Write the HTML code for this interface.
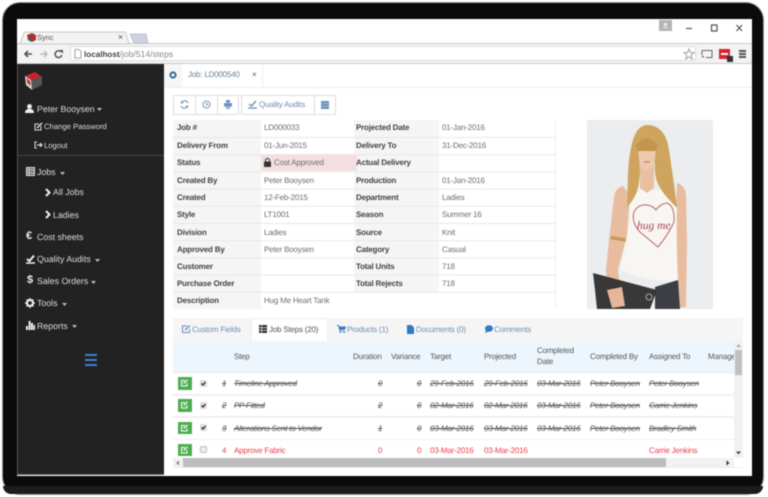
<!DOCTYPE html>
<html><head><meta charset="utf-8"><title>Sync</title>
<style>
html,body{margin:0;padding:0;background:#fff;}
#w{position:relative;width:768px;height:497px;overflow:hidden;background:#fff;font-family:"Liberation Sans",sans-serif;filter:blur(.45px);text-rendering:geometricPrecision;}
#w div,#w svg.a{position:absolute;}
.t{white-space:nowrap;position:absolute;}
.l{font-size:8px;letter-spacing:-.2px;font-weight:bold;color:#444;}
.v{font-size:8px;letter-spacing:-.2px;color:#6e6e6e;}
.s{font-size:8.800px;color:#ddd;}
.h{font-size:8px;letter-spacing:-.2px;color:#555;}
.d{font-size:8px;letter-spacing:-.2px;color:#555;font-style:italic;text-decoration:line-through;}
.r{font-size:8px;letter-spacing:-.2px;color:#e8404a;}
.b{font-size:8px;letter-spacing:-.2px;color:#6d8fb5;}
</style></head><body>
<div id="w">
<!-- device -->
<div style="left:2px;top:2px;width:760px;height:491px;background:#0b0b0b;border-radius:18px;border:1px solid #999;"></div>
<div style="left:17px;top:19px;width:735px;height:457px;background:#fff;"></div>
<div style="left:3px;top:486px;width:760px;height:8px;background:#1c1c1c;border-radius:0 0 18px 18px;"></div>

<!-- browser chrome -->
<div style="left:17px;top:43px;width:735px;height:21px;background:#f3f3f3;border-top:1px solid #ccc;box-sizing:border-box;border-bottom:1px solid #ccc;"></div>
<svg class="a" style="left:17px;top:31px" width="135" height="14"><path d="M3 13 L7 2 Q7.500 1 9 1 H107 Q109 1 109 2.500 L112 13Z" fill="#f3f3f3" stroke="#c8c8c8"/><path d="M113 3 H129 L131 12 H117Z" fill="#cbd3e0" stroke="#bcc3cf"/></svg>
<svg class="a" style="left:27px;top:33px" width="9" height="9"><path d="M0 2 L5 0 L9 2 V7 L5 9 L1 7Z" fill="#a33"/><path d="M1 5 L5 4 V9 L1 7Z" fill="#555"/></svg>
<span class="t" style="left:37px;top:33px;font-size:7.500px;color:#555;">Sync</span>
<span class="t" style="left:118px;top:32px;font-size:9px;color:#555;">×</span>
<div style="left:659px;top:20px;width:13px;height:11px;background:#b4b4b4;"></div>
<svg class="a" style="left:659px;top:20px" width="13" height="11"><path d="M4 8 H9 V7 H4Z M5 3 H8 V6 H5Z" fill="#eee"/></svg>
<svg class="a" style="left:684px;top:22px" width="62" height="12" fill="none" stroke="#555" stroke-width="1.200"><path d="M2 6.500 H8"/><path d="M27.500 3 H33 V9 H27.500Z"/><path d="M52.500 3 L58 9 M58 3 L52.500 9"/></svg>
<svg class="a" style="left:23px;top:49px" width="42" height="10"><path d="M9 5 H2 M5 2 L2 5 L5 8" stroke="#555" stroke-width="1.600" fill="none"/><path d="M17 5 H24 M21 2 L24 5 L21 8" stroke="#bbb" stroke-width="1.500" fill="none"/><path d="M38 2.800 A3.400 3.400 0 1 0 38.800 6" stroke="#555" stroke-width="1.500" fill="none"/><path d="M36 1 H40 V4.500Z" fill="#555"/></svg>
<div style="left:70px;top:46px;width:626px;height:15px;background:#fff;border:1px solid #ddd;box-sizing:border-box;border-radius:2px;"></div>
<svg class="a" style="left:74px;top:49px" width="8" height="10"><path d="M1 .5 H5 L7 2.500 V9 H1Z" fill="none" stroke="#888" stroke-width=".8"/></svg>
<span class="t" style="left:84px;top:49px;font-size:8.600px;color:#888;"><b style="color:#444;font-size:8.100px">localhost</b>/job/514/steps</span>
<svg class="a" style="left:683px;top:48px" width="12" height="12"><path d="M6 1 L7.400 4.600 H11 L8.200 7 L9.200 11 L6 8.700 L2.800 11 L3.800 7 L1 4.600 H4.600Z" fill="#fff" stroke="#999" stroke-width=".9"/></svg>
<svg class="a" style="left:701px;top:49px" width="12" height="11"><path d="M1 1.500 H11 V8.500 H5 M1 6 V1.500" fill="none" stroke="#666"/><path d="M1 6 V8.500 H3.500Z" fill="#666"/></svg>
<div style="left:719px;top:49px;width:11px;height:10px;background:#d9232e;"></div>
<div style="left:721px;top:53px;width:7px;height:1.500px;background:#fff;"></div>
<div style="left:727px;top:56px;width:6px;height:6px;background:#333;"></div>
<div style="left:739px;top:50px;width:7px;height:1.500px;background:#555;box-shadow:0 3px #555,0 6px #555;"></div>

<!-- sidebar -->
<div style="left:17px;top:64px;width:147px;height:411px;background:#222;border-left:1px solid #555;border-bottom:1px solid #666;box-sizing:border-box;"></div>
<div style="left:18px;top:155px;width:146px;height:1px;background:#444;"></div>
<svg class="a" style="left:24px;top:72px" width="18" height="18"><path d="M1 4 L11 0 L18 5 L7 8Z" fill="#c6252d"/><path d="M7 8 L18 5 V13 L8 18Z" fill="#555"/><path d="M1 4 L7 8 L8 18 L2 13Z" fill="#ddd"/><path d="M2.500 6 L6 9 L6.500 14 L3.500 11Z" fill="#c6252d"/></svg>
<svg class="a" style="left:25px;top:104px" width="9" height="9" fill="#eee"><circle cx="4.500" cy="2.500" r="2.400"/><path d="M0 9 Q0 5.500 3 5 H6 Q9 5.500 9 9Z"/></svg>
<span class="t s" style="left:37px;top:104px;">Peter Booysen</span>
<svg class="a" style="left:97px;top:108px" width="5" height="3"><path d="M0 0 H5 L2.500 3Z" fill="#bbb"/></svg>
<svg class="a" style="left:34px;top:122px" width="9" height="9" fill="none" stroke="#ddd"><path d="M7 4 V8 H1 V2 H5"/><path d="M3 6 L8 1" stroke-width="1.500"/></svg>
<span class="t s" style="left:44px;top:122px;font-size:7.700px;">Change Password</span>
<svg class="a" style="left:34px;top:141px" width="9" height="8" fill="none" stroke="#ddd"><path d="M3 1 H1 V7 H3"/><path d="M3 4 H8 M6 2 L8 4 L6 6" stroke-width="1.200"/></svg>
<span class="t s" style="left:44px;top:141px;font-size:7.700px;">Logout</span>
<svg class="a" style="left:26px;top:167px" width="9" height="9"><rect x=".5" y=".5" width="8" height="8" fill="#777" stroke="#ddd"/><path d="M0 3.200 H9 M0 5.800 H9 M3.200 0 V9" stroke="#ddd" stroke-width=".7"/></svg>
<span class="t s" style="left:37px;top:167px;">Jobs</span>
<svg class="a" style="left:60px;top:172px" width="5" height="3"><path d="M0 0 H5 L2.500 3Z" fill="#bbb"/></svg>
<svg class="a" style="left:45px;top:188px" width="6" height="9"><path d="M1 1 L4.500 4.500 L1 8" stroke="#eee" stroke-width="2" fill="none"/></svg>
<span class="t s" style="left:53px;top:187px;">All Jobs</span>
<svg class="a" style="left:45px;top:210px" width="6" height="9"><path d="M1 1 L4.500 4.500 L1 8" stroke="#eee" stroke-width="2" fill="none"/></svg>
<span class="t s" style="left:53px;top:210px;">Ladies</span>
<span class="t" style="left:26px;top:230px;font-size:11px;font-weight:bold;color:#eee;">€</span>
<span class="t s" style="left:37px;top:232px;">Cost sheets</span>
<svg class="a" style="left:26px;top:254px" width="9" height="10"><path d="M1 5 L3.500 7 L8 1.500" stroke="#eee" stroke-width="2" fill="none"/><path d="M0 9 H9" stroke="#eee" stroke-width="1.500"/></svg>
<span class="t s" style="left:37px;top:254px;">Quality Audits</span>
<svg class="a" style="left:95px;top:259px" width="5" height="3"><path d="M0 0 H5 L2.500 3Z" fill="#bbb"/></svg>
<span class="t" style="left:27px;top:274px;font-size:11px;font-weight:bold;color:#eee;">$</span>
<span class="t s" style="left:37px;top:276px;">Sales Orders</span>
<svg class="a" style="left:91px;top:281px" width="5" height="3"><path d="M0 0 H5 L2.500 3Z" fill="#bbb"/></svg>
<svg class="a" style="left:25px;top:298px" width="10" height="10"><circle cx="5" cy="5" r="3" fill="none" stroke="#eee" stroke-width="2.200"/><path d="M5 0 V10 M0 5 H10 M1.500 1.500 L8.500 8.500 M8.500 1.500 L1.500 8.500" stroke="#eee" stroke-width="1.200" stroke-dasharray="1.600 6.800"/></svg>
<span class="t s" style="left:37px;top:298px;">Tools</span>
<svg class="a" style="left:62px;top:303px" width="5" height="3"><path d="M0 0 H5 L2.500 3Z" fill="#bbb"/></svg>
<svg class="a" style="left:26px;top:320px" width="9" height="10" fill="#eee"><rect x="0" y="6" width="2" height="4"/><rect x="2.600" y="1" width="2" height="9"/><rect x="5" y="3" width="2" height="7"/><rect x="7.400" y="5" width="1.600" height="5"/></svg>
<span class="t s" style="left:37px;top:321px;">Reports</span>
<svg class="a" style="left:72px;top:325px" width="5" height="3"><path d="M0 0 H5 L2.500 3Z" fill="#bbb"/></svg>
<div style="left:85px;top:354px;width:12px;height:2px;background:#3f7fd8;box-shadow:0 5px #3f7fd8,0 10px #3f7fd8;"></div>

<!-- content tabs -->
<div style="left:165px;top:87px;width:587px;height:1px;background:#eee;"></div>
<div style="left:164px;top:64px;width:18px;height:23px;background:#f6f6f6;"></div>
<div style="left:262px;top:64px;width:1px;height:23px;background:#eee;"></div>
<svg class="a" style="left:169px;top:71px" width="8" height="8"><circle cx="4" cy="4" r="2.600" fill="none" stroke="#2d6a9f" stroke-width="2"/></svg>
<span class="t v" style="left:188px;top:70px;color:#6a7f92;">Job: LD000540</span>
<span class="t" style="left:252px;top:70px;font-size:8px;color:#456;">×</span>

<!-- toolbar -->
<div style="left:173px;top:95px;width:66px;height:20px;border:1px solid #ddd;box-sizing:border-box;"></div>
<div style="left:195px;top:95px;width:1px;height:20px;background:#ddd;"></div>
<div style="left:217px;top:95px;width:1px;height:20px;background:#ddd;"></div>
<div style="left:241px;top:95px;width:95px;height:20px;border:1px solid #ddd;box-sizing:border-box;"></div>
<div style="left:314px;top:95px;width:1px;height:20px;background:#ddd;"></div>
<svg class="a" style="left:180px;top:100px" width="9" height="9" fill="none" stroke="#7f9fc2" stroke-width="1.200"><path d="M8 3 A3.400 3.400 0 0 0 1.800 2.800 M1 6 A3.400 3.400 0 0 0 7.200 6.200"/><path d="M1.200 .8 V3 H3.400 M7.800 8.200 V6 H5.600" stroke-width=".9"/></svg>
<svg class="a" style="left:202px;top:100px" width="9" height="9" fill="none" stroke="#7f9fc2" stroke-width="1.100"><circle cx="4.500" cy="4.500" r="3.500"/><path d="M4.500 2.500 V4.800 H6.400"/></svg>
<svg class="a" style="left:224px;top:100px" width="8" height="9" fill="#6b92bd"><rect x="2" y="0" width="4" height="2.600"/><rect x="0" y="3" width="8" height="3.600"/><rect x="2" y="6.200" width="4" height="2.800" fill="#94b1d0"/></svg>
<svg class="a" style="left:248px;top:100px" width="9" height="9"><path d="M1 4 L3.500 6 L8 1" stroke="#6b92bd" stroke-width="1.400" fill="none"/><path d="M0 8 H9" stroke="#6b92bd" stroke-width="1.300"/></svg>
<span class="t b" style="left:259px;top:100px;">Quality Audits</span>
<svg class="a" style="left:321px;top:101px" width="8" height="8"><rect width="8" height="8" fill="#6b92bd"/><path d="M0 2.700 H8 M0 5.300 H8" stroke="#b9cce0" stroke-width=".6"/></svg>

<!-- detail table -->
<div style="left:173px;top:120px;width:88px;height:189px;background:#f5f5f5;"></div>
<div style="left:354px;top:120px;width:85px;height:172px;background:#f5f5f5;"></div>
<div style="left:261px;top:154px;width:93px;height:17px;background:#f3dfe0;"></div>
<div style="left:354px;top:154px;width:3px;height:17px;background:#f3dfe0;"></div>
<div style="left:555px;top:120px;width:1px;height:189px;background:#eee;"></div>
<div style="left:173px;top:137px;width:382px;height:1px;background:#e8e8e8;box-shadow:0 17.200px #e8e8e8,0 34.400px #e8e8e8,0 51.600px #e8e8e8,0 68.800px #e8e8e8,0 86px #e8e8e8,0 103.200px #e8e8e8,0 120.400px #e8e8e8,0 137.600px #e8e8e8,0 154.800px #e8e8e8;"></div>

<span class="t l" style="left:177px;top:123px;">Job #</span><span class="t v" style="left:264px;top:123px;">LD000033</span><span class="t l" style="left:356px;top:123px;">Projected Date</span><span class="t v" style="left:442px;top:123px;">01-Jan-2016</span>
<span class="t l" style="left:177px;top:141px;">Delivery From</span><span class="t v" style="left:264px;top:141px;">01-Jun-2015</span><span class="t l" style="left:356px;top:141px;">Delivery To</span><span class="t v" style="left:442px;top:141px;">31-Dec-2016</span>
<span class="t l" style="left:177px;top:158px;">Status</span><span class="t v" style="left:274px;top:158px;">Cost Approved</span><span class="t l" style="left:356px;top:158px;">Actual Delivery</span>
<svg class="a" style="left:264px;top:158px" width="8" height="9"><rect x="0" y="3.500" width="7" height="5.500" fill="#333"/><path d="M1.500 4 V2.500 A2 2 0 0 1 5.500 2.500 V4" fill="none" stroke="#333"/></svg>
<span class="t l" style="left:177px;top:176px;">Created By</span><span class="t v" style="left:264px;top:176px;">Peter Booysen</span><span class="t l" style="left:356px;top:176px;">Production</span><span class="t v" style="left:442px;top:176px;">01-Jan-2016</span>
<span class="t l" style="left:177px;top:193px;">Created</span><span class="t v" style="left:264px;top:193px;">12-Feb-2015</span><span class="t l" style="left:356px;top:193px;">Department</span><span class="t v" style="left:442px;top:193px;">Ladies</span>
<span class="t l" style="left:177px;top:210px;">Style</span><span class="t v" style="left:264px;top:210px;">LT1001</span><span class="t l" style="left:356px;top:210px;">Season</span><span class="t v" style="left:442px;top:210px;">Summer 16</span>
<span class="t l" style="left:177px;top:228px;">Division</span><span class="t v" style="left:264px;top:228px;">Ladies</span><span class="t l" style="left:356px;top:228px;">Source</span><span class="t v" style="left:442px;top:228px;">Knit</span>
<span class="t l" style="left:177px;top:245px;">Approved By</span><span class="t v" style="left:264px;top:245px;">Peter Booysen</span><span class="t l" style="left:356px;top:245px;">Category</span><span class="t v" style="left:442px;top:245px;">Casual</span>
<span class="t l" style="left:177px;top:262px;">Customer</span><span class="t l" style="left:356px;top:262px;">Total Units</span><span class="t v" style="left:442px;top:262px;">718</span>
<span class="t l" style="left:177px;top:279px;">Purchase Order</span><span class="t l" style="left:356px;top:279px;">Total Rejects</span><span class="t v" style="left:442px;top:279px;">718</span>
<span class="t l" style="left:177px;top:296px;">Description</span><span class="t v" style="left:264px;top:296px;">Hug Me Heart Tank</span>

<!-- photo -->
<svg class="a" style="left:587px;top:120px" width="126" height="189" viewBox="587 120 126 189">
<rect x="587" y="120" width="126" height="189" fill="#ecedef"/>
<path d="M623 186 Q615 188 614 197 L609 240 L606 270 L607 300 L622 300 L618 270 L627 235 L630 195Z" fill="#e8bd9f"/>
<path d="M677 183 Q686 186 686 197 L687 243 L686 307 L673 308 L676 280 L675 230Z" fill="#e8bd9f"/>
<path d="M630 200 L640 190 L658 190 L668 186 L677 207 Q676 240 678 281 Q650 283 620 270 Q628 240 630 215Z" fill="#f8f6f3"/>
<path d="M640 165 H654 V188 L647 193 L640 188Z" fill="#e8bf9f"/>
<path d="M647 125 C636 126 632 138 629 160 C627 180 628 195 627 207 C634 200 639 192 640 172 L639 150 L654 150 L655 172 C656 188 668 198 677 208 C675 190 672 170 669 150 C667 135 660 125 647 125Z" fill="#cfa45e"/>
<path d="M638 146 H656 L655 160 Q652 170 647 170 Q641 170 639 160Z" fill="#efc9ad"/>
<path d="M636 146 Q646 130 658 146 L656 151 L638 151Z" fill="#c59550"/>
<path d="M644 162 H650" stroke="#c76a6a" stroke-width="1"/>
<path d="M658 247 L640 232 Q631 222 634 212 Q638 204 647 205 Q653 206 656 210 Q660 204 667 203 Q675 206 674 222 Q668 235 658 247Z" fill="none" stroke="#b9646c" stroke-width="1"/>
<text x="637" y="229" font-family="Liberation Serif,serif" font-style="italic" font-size="11.500" fill="#a94a56">hug me</text>
<rect x="611" y="237" width="15" height="3.500" fill="#c59c52" transform="rotate(8 618 238)"/>
<path d="M655 287 L678 280 L680 309 L655 309Z" fill="#3b3f44"/>
<path d="M593 273 L657 290 L650 309 L597 309 L595 290Z" fill="#383838"/>
<circle cx="649" cy="297" r="3" fill="none" stroke="#aaa" stroke-width="1"/>
<path d="M607 290 L622 287 L625 306 L612 308Z" fill="#e6b698"/>
</svg>

<!-- job tabs -->
<div style="left:173px;top:318px;width:570px;height:23px;background:#f5f5f5;"></div>
<div style="left:251px;top:318px;width:77px;height:24px;background:#fff;border:1px solid #eee;box-sizing:border-box;border-bottom:0;"></div>
<svg class="a" style="left:182px;top:325px" width="9" height="8" fill="none" stroke="#6d8fb5"><path d="M7.500 4 V7.500 H.5 V1 H5"/><path d="M3 5 L8 .5" stroke-width="1.300"/></svg>
<span class="t b" style="left:192px;top:325px;">Custom Fields</span>
<svg class="a" style="left:259px;top:325px" width="8" height="8"><rect width="8" height="8" fill="#333"/><path d="M0 2.700 H8 M0 5.300 H8 M2.700 0 V8" stroke="#fff" stroke-width=".6"/></svg>
<span class="t h" style="left:269px;top:325px;">Job Steps (20)</span>
<svg class="a" style="left:337px;top:325px" width="9" height="8" fill="#3a7cc2"><path d="M0 0 H2 L2.500 1.500 H9 L8 5 H3 L3.300 6 H8 V6.800 H2.500 L1.300 1 H0Z"/><circle cx="3.300" cy="7.400" r=".7"/><circle cx="7.300" cy="7.400" r=".7"/></svg>
<span class="t b" style="left:347px;top:325px;">Products (1)</span>
<svg class="a" style="left:407px;top:325px" width="7" height="9"><path d="M0 0 H4.500 L7 2.500 V9 H0Z" fill="#2f78c4"/></svg>
<span class="t b" style="left:416px;top:325px;">Documents (0)</span>
<svg class="a" style="left:485px;top:325px" width="8" height="8"><ellipse cx="4" cy="3.500" rx="4" ry="3.200" fill="#2f78c4"/><path d="M1 5 L0 8 L3.500 6.500Z" fill="#2f78c4"/></svg>
<span class="t b" style="left:494px;top:325px;">Comments</span>

<!-- grid -->
<div style="left:173px;top:341px;width:561px;height:117px;background:#fff;overflow:hidden;"></div>
<div style="left:173px;top:341px;width:561px;height:31px;background:#edf6fc;"></div>
<div style="left:173px;top:372px;width:561px;height:1px;background:#e6e6e6;"></div>
<div style="left:173px;top:394px;width:561px;height:2px;background:#f0f0f0;"></div>
<div style="left:173px;top:416px;width:561px;height:2px;background:#f0f0f0;"></div>
<div style="left:173px;top:439px;width:561px;height:1px;background:#f0f0f0;"></div>
<span class="t h" style="left:234px;top:352px;">Step</span>
<span class="t h" style="left:353px;top:352px;">Duration</span>
<span class="t h" style="left:391px;top:352px;">Variance</span>
<span class="t h" style="left:430px;top:352px;">Target</span>
<span class="t h" style="left:484px;top:352px;">Projected</span>
<span class="t h" style="left:537px;top:346px;">Completed</span>
<span class="t h" style="left:537px;top:357px;">Date</span>
<span class="t h" style="left:590px;top:352px;">Completed By</span>
<span class="t h" style="left:649px;top:352px;">Assigned To</span>
<div style="left:708px;top:351px;width:26px;height:12px;overflow:hidden;"><span class="t h" style="left:0;top:1px;">Manager</span></div>

<!-- row icons -->
<div style="left:178px;top:377px;width:14px;height:13px;background:#4cae4f;"></div>
<div style="left:178px;top:399px;width:14px;height:13px;background:#4cae4f;"></div>
<div style="left:178px;top:422px;width:14px;height:12px;background:#4cae4f;"></div>
<div style="left:178px;top:444px;width:14px;height:12px;background:#4cae4f;"></div>
<svg class="a" style="left:181px;top:379px" width="7" height="8" fill="none" stroke="#fff"><path d="M6 4 V7 H.5 V1.500 H4"/><path d="M2.500 4.500 L6.500 1" stroke-width="1.200"/></svg>
<svg class="a" style="left:181px;top:401px" width="7" height="8" fill="none" stroke="#fff"><path d="M6 4 V7 H.5 V1.500 H4"/><path d="M2.500 4.500 L6.500 1" stroke-width="1.200"/></svg>
<svg class="a" style="left:181px;top:424px" width="7" height="8" fill="none" stroke="#fff"><path d="M6 4 V7 H.5 V1.500 H4"/><path d="M2.500 4.500 L6.500 1" stroke-width="1.200"/></svg>
<svg class="a" style="left:181px;top:446px" width="7" height="8" fill="none" stroke="#fff"><path d="M6 4 V7 H.5 V1.500 H4"/><path d="M2.500 4.500 L6.500 1" stroke-width="1.200"/></svg>
<svg class="a" style="left:200px;top:380px" width="7" height="7"><rect width="7" height="7" rx="1.500" fill="#ddd"/><path d="M1.500 3.500 L3 5 L5.500 2" stroke="#222" stroke-width="1.200" fill="none"/></svg>
<svg class="a" style="left:200px;top:402px" width="7" height="7"><rect width="7" height="7" rx="1.500" fill="#ddd"/><path d="M1.500 3.500 L3 5 L5.500 2" stroke="#222" stroke-width="1.200" fill="none"/></svg>
<svg class="a" style="left:200px;top:424px" width="7" height="7"><rect width="7" height="7" rx="1.500" fill="#ddd"/><path d="M1.500 3.500 L3 5 L5.500 2" stroke="#222" stroke-width="1.200" fill="none"/></svg>
<svg class="a" style="left:200px;top:446px" width="7" height="7"><rect x=".5" y=".5" width="6" height="6" rx="1.500" fill="#eee" stroke="#bbb"/></svg>

<!-- rows -->
<span class="t d" style="left:222px;top:378.500px;">1</span><span class="t d" style="left:234px;top:378.500px;">Timeline Approved</span><span class="t d" style="left:378px;top:378.500px;">0</span><span class="t d" style="left:417px;top:378.500px;">0</span><span class="t d" style="left:430px;top:378.500px;">29-Feb-2016</span><span class="t d" style="left:484px;top:378.500px;">29-Feb-2016</span><span class="t d" style="left:537px;top:378.500px;">03-Mar-2016</span><span class="t d" style="left:590px;top:378.500px;">Peter Booysen</span><span class="t d" style="left:649px;top:378.500px;">Peter Booysen</span>
<span class="t d" style="left:222px;top:401px;">2</span><span class="t d" style="left:234px;top:401px;">PP Fitted</span><span class="t d" style="left:378px;top:401px;">2</span><span class="t d" style="left:417px;top:401px;">0</span><span class="t d" style="left:430px;top:401px;">02-Mar-2016</span><span class="t d" style="left:484px;top:401px;">02-Mar-2016</span><span class="t d" style="left:537px;top:401px;">03-Mar-2016</span><span class="t d" style="left:590px;top:401px;">Peter Booysen</span><span class="t d" style="left:649px;top:401px;">Carrie Jenkins</span>
<span class="t d" style="left:222px;top:423.500px;">3</span><span class="t d" style="left:234px;top:423.500px;">Alterations Sent to Vendor</span><span class="t d" style="left:378px;top:423.500px;">1</span><span class="t d" style="left:417px;top:423.500px;">0</span><span class="t d" style="left:430px;top:423.500px;">03-Mar-2016</span><span class="t d" style="left:484px;top:423.500px;">03-Mar-2016</span><span class="t d" style="left:537px;top:423.500px;">03-Mar-2016</span><span class="t d" style="left:590px;top:423.500px;">Peter Booysen</span><span class="t d" style="left:649px;top:423.500px;">Bradley Smith</span>
<span class="t r" style="left:222px;top:445.500px;">4</span><span class="t r" style="left:234px;top:445.500px;">Approve Fabric</span><span class="t r" style="left:378px;top:445.500px;">0</span><span class="t r" style="left:417px;top:445.500px;">0</span><span class="t r" style="left:430px;top:445.500px;">03-Mar-2016</span><span class="t r" style="left:484px;top:445.500px;">03-Mar-2016</span><span class="t r" style="left:649px;top:445.500px;">Carrie Jenkins</span>

<!-- scrollbars -->
<div style="left:734px;top:341px;width:9px;height:117px;background:#f1f1f1;"></div>
<div style="left:735px;top:350px;width:7px;height:25px;background:#c0c0c0;"></div>
<svg class="a" style="left:735px;top:344px" width="7" height="4"><path d="M3.500 0 L6 3 H1Z" fill="#aaa"/></svg>
<svg class="a" style="left:735px;top:451px" width="7" height="4"><path d="M3.500 3.500 L6 .5 H1Z" fill="#444"/></svg>
<div style="left:173px;top:458px;width:561px;height:9px;background:#f1f1f1;"></div>
<div style="left:183px;top:458px;width:483px;height:9px;background:#bdbdbd;"></div>
<svg class="a" style="left:176px;top:460px" width="4" height="6"><path d="M0 3 L3 .5 V5.500Z" fill="#888"/></svg>
<svg class="a" style="left:726px;top:460px" width="4" height="6"><path d="M3.500 3 L.5 .5 V5.500Z" fill="#333"/></svg>
<div style="left:173px;top:467px;width:570px;height:1px;background:#eee;"></div>
</div>
</body></html>
